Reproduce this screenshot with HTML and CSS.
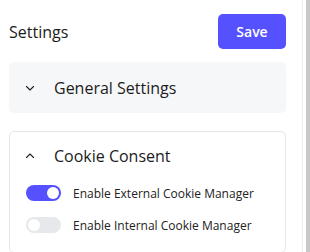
FILE: index.html
```html
<!DOCTYPE html>
<html>
<head>
<meta charset="utf-8">
<link rel="stylesheet" href="styles.css">
</head>
<body>
  <div class="frame">
    <div class="main">
      <div class="topbar">
        <span class="title">Settings</span>
        <button class="save">Save</button>
      </div>

      <div class="panel panel-closed">
        <div class="panel-head">
          <svg class="chev" width="10" height="6" viewBox="0 0 10 6"><path d="M1.5 1.5l3.5 3.5 3.5-3.5" fill="none" stroke="#222" stroke-width="1.1" stroke-linecap="round" stroke-linejoin="round"/></svg>
          <span>General Settings</span>
        </div>
      </div>

      <div class="panel panel-open">
        <div class="panel-head">
          <svg class="chev" width="10" height="6" viewBox="0 0 10 6"><path d="M1.5 4.5l3.5-3.5 3.5 3.5" fill="none" stroke="#222" stroke-width="1.1" stroke-linecap="round" stroke-linejoin="round"/></svg>
          <span>Cookie Consent</span>
        </div>
        <ul class="opts">
          <li><span class="toggle on"></span>Enable External Cookie Manager</li>
          <li><span class="toggle"></span>Enable Internal Cookie Manager</li>
        </ul>
      </div>
    </div>
    <div class="track"></div>
  </div>
</body>
</html>
```

FILE: styles.css
```css
html, body {margin: 0; padding: 0; height: 100%; background: #fff;}
body {font-family: "Open Sans", "Noto Sans", sans-serif; color: #1c1c1c; overflow: hidden;}
ul {margin: 0; padding: 0; list-style: none;}

.frame {display: flex; height: 100%; gap: 3px;}
.main {
  width: 277px; padding: 0 16px 0 9px; overflow: hidden;
  border-right: 1px solid #ececec;
}
.track {width: 4px; background: #c8c8c8;}

/*top bar*/
.topbar {
  display: flex; justify-content: space-between; align-items: center;
  margin-top: 14px; height: 35px;
}
.title {font-size: 16px;}
.save {
  width: 68px; height: 35px; border: 0; border-radius: 5px;
  background: #5551ff; color: #fff;
  font: 600 14px "Open Sans", sans-serif;
}

/*panels*/
.panel {border-radius: 5px;}
.panel-closed {background: #f6f7f9; margin-top: 13px; height: 51px;}
.panel-open {border: 1px solid #e4e6ea; margin-top: 18px; height: 120px;}
.panel-head {
  display: flex; align-items: center; height: 51px;
  padding-left: 16px; font-size: 16px;
}
.panel-open .panel-head {height: 48px; padding-left: 15px;}
.chev {margin-right: 19px;}

.opts {padding: 5px 0 0 16px;}
.opts li {
  display: flex; align-items: center; height: 16px; margin-bottom: 16px;
  font-size: 12px; color: #222;
}
.toggle {
  position: relative; width: 35px; height: 16px; border-radius: 8px;
  background: #e6e8eb; margin-right: 12px;
}
.toggle:after {
  content: ""; position: absolute; top: 2px; left: 2px;
  width: 12px; height: 12px; border-radius: 50%; background: #fff;
}
.toggle.on {background: #5551ff;}
.toggle.on:after {left: 21px;}
```
